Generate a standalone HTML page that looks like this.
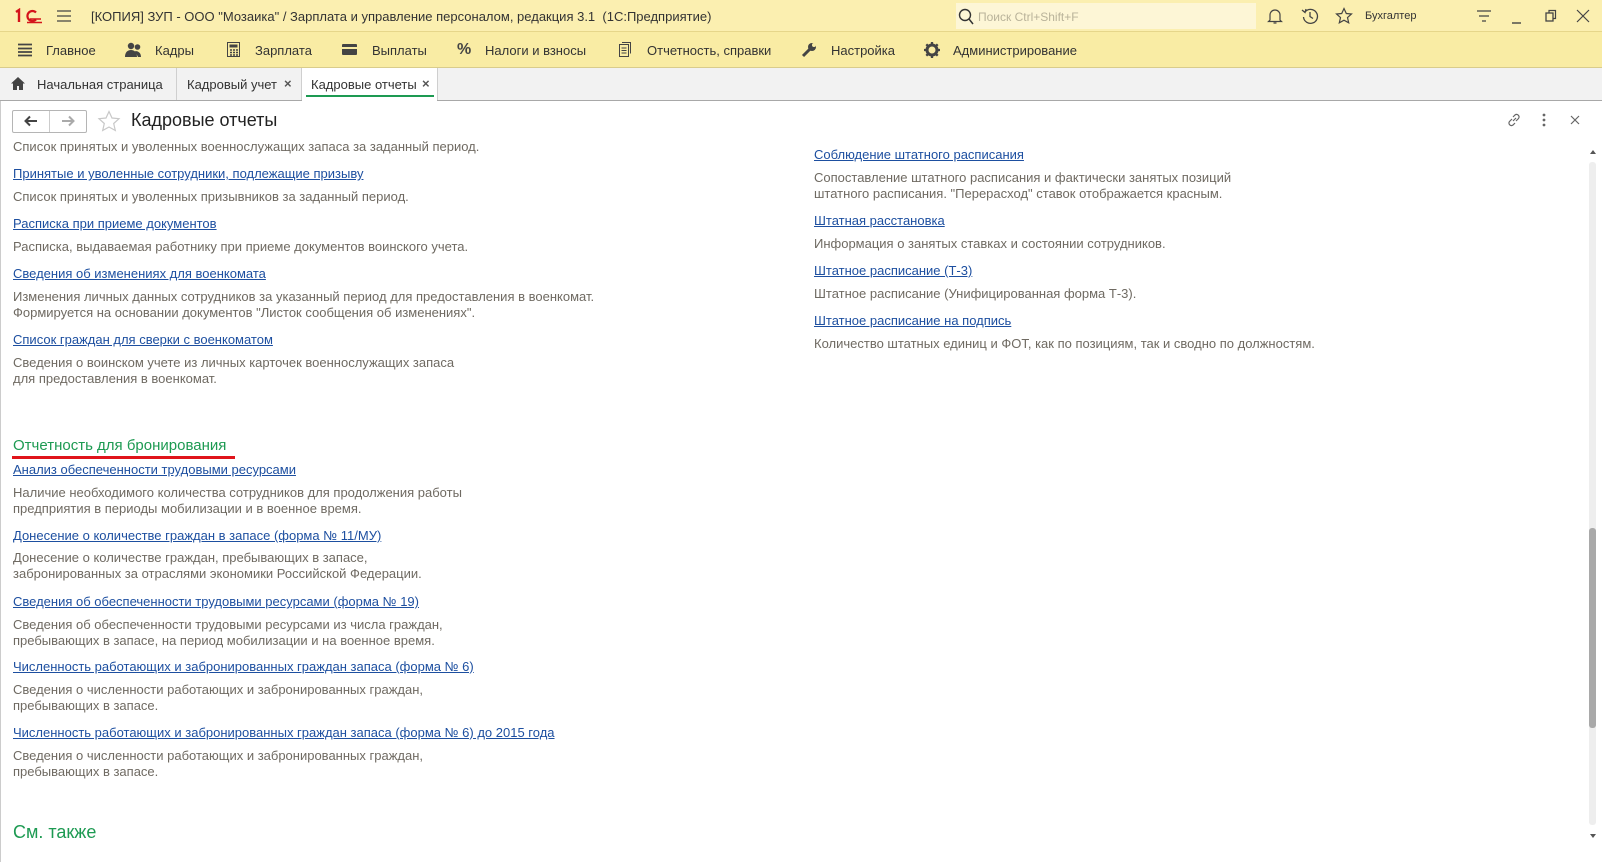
<!DOCTYPE html>
<html><head><meta charset="utf-8"><style>
*{margin:0;padding:0;box-sizing:border-box}
body{width:1602px;height:862px;overflow:hidden;background:#fff;font-family:"Liberation Sans",Arial,sans-serif;font-size:13px;color:#333;position:relative}
.a{position:absolute;white-space:nowrap}
#tb{position:absolute;left:0;top:0;width:1602px;height:32px;background:#fbefb0;border-bottom:1px solid #e6d68a}
#mb{position:absolute;left:0;top:32px;width:1602px;height:36px;background:#f9eca4;border-bottom:1px solid #d9cc8c}
#tabs{position:absolute;left:0;top:68px;width:1602px;height:33px;background:#f2f2f2;border-bottom:1px solid #a8a8a8}
.lk{color:#1d4fa0;text-decoration:underline;font-size:13px}
.ds{color:#6f6a62;font-size:13px;line-height:16.3px}
.sep{position:absolute;top:68px;width:1px;height:32px;background:#cfcfcf}
</style></head><body>
<div id="tb"></div>
<div id="mb"></div>
<div id="tabs"></div>

<!-- title bar -->
<svg class="a" style="left:14px;top:8px" width="30" height="16"><path d="M2 4l3-2v12" fill="none" stroke="#d4141b" stroke-width="2.4"/><path d="M22 4.5A5 5 0 1 0 22 11.5" fill="none" stroke="#d4141b" stroke-width="2.2"/><path d="M13 14.5h15M16 11h11" stroke="#d4141b" stroke-width="1.6"/></svg>
<svg class="a" style="left:56px;top:9px" width="16" height="14"><path d="M1 2h14M1 7h14M1 12h14" stroke="#444" stroke-width="1.3"/></svg>
<div class="a" style="left:91px;top:9px;font-size:13px;color:#333">[КОПИЯ] ЗУП - ООО "Мозаика" / Зарплата и управление персоналом, редакция 3.1&nbsp; (1С:Предприятие)</div>
<div class="a" style="left:956px;top:3px;width:300px;height:26px;background:#fdf6d6"></div>
<svg class="a" style="left:958px;top:8px" width="16" height="17"><circle cx="7" cy="7" r="5.5" fill="none" stroke="#333" stroke-width="1.4"/><path d="M11 11l4 5" stroke="#333" stroke-width="1.5"/></svg>
<div class="a" style="left:978px;top:10px;font-size:12px;color:#b9b39a">Поиск Ctrl+Shift+F</div>
<svg class="a" style="left:1267px;top:7px" width="16" height="18"><path d="M3 13V8a5 5 0 0110 0v5l1.5 1.5h-13z M6.5 16h3" fill="none" stroke="#444" stroke-width="1.2"/></svg>
<svg class="a" style="left:1301px;top:7px" width="18" height="18"><path d="M4 5A7 7 0 1 1 2.5 10" fill="none" stroke="#444" stroke-width="1.3"/><path d="M1 3l3 2.5 1-3.5M9 5v4.5l3 2" fill="none" stroke="#444" stroke-width="1.3"/></svg>
<svg class="a" style="left:1335px;top:7px" width="18" height="18"><path d="M9 1.5l2.3 5 5.2.5-4 3.6 1.2 5.2L9 13.2 4.3 15.8l1.2-5.2-4-3.6 5.2-.5z" fill="none" stroke="#444" stroke-width="1.2"/></svg>
<div class="a" style="left:1365px;top:10px;font-size:11px;color:#333">Бухгалтер</div>
<svg class="a" style="left:1476px;top:9px" width="16" height="16"><path d="M1 2h14M3 7h10M6 12h4" stroke="#444" stroke-width="1.3"/></svg>
<svg class="a" style="left:1510px;top:9px" width="14" height="16"><path d="M2 14h9" stroke="#444" stroke-width="1.4"/></svg>
<svg class="a" style="left:1544px;top:9px" width="14" height="14"><rect x="2" y="4" width="7" height="8" fill="none" stroke="#444" stroke-width="1.3"/><path d="M5 4V1.5h6.5v8H9" fill="none" stroke="#444" stroke-width="1.2"/></svg>
<svg class="a" style="left:1576px;top:9px" width="14" height="14"><path d="M1 1l12 12M13 1L1 13" stroke="#444" stroke-width="1.2"/></svg>

<!-- menu -->
<svg class="a" style="left:18px;top:43px" width="14" height="14"><path d="M0 1.5h14M0 5.5h14M0 9h14M0 12.5h14" stroke="#444" stroke-width="1.8"/></svg>
<div class="a" style="left:46px;top:43px">Главное</div>
<svg class="a" style="left:125px;top:42px" width="18" height="15"><circle cx="6" cy="4" r="3.2" fill="#444"/><circle cx="12.5" cy="5" r="2.8" fill="#444"/><path d="M0 15c0-5 3-7 6-7s6 2 6 7zM10 9c3 0 6 1.5 6 6h-3z" fill="#444"/></svg>
<div class="a" style="left:155px;top:43px">Кадры</div>
<svg class="a" style="left:227px;top:42px" width="13" height="15"><rect x="0.5" y="0.5" width="12" height="14" fill="none" stroke="#444"/><rect x="2.5" y="2.5" width="8" height="3" fill="#444"/><path d="M3 8h2M6 8h2M9 8h2M3 10.5h2M6 10.5h2M9 10.5h2M3 13h2M6 13h2M9 13h2" stroke="#444" stroke-width="1.5"/></svg>
<div class="a" style="left:255px;top:43px">Зарплата</div>
<svg class="a" style="left:342px;top:44px" width="15" height="11"><rect width="15" height="11" rx="1" fill="#444"/><rect y="3" width="15" height="2" fill="#f9eca4"/></svg>
<div class="a" style="left:372px;top:43px">Выплаты</div>
<div class="a" style="left:457px;top:41px;font-size:16px;font-weight:bold;color:#444">%</div>
<div class="a" style="left:485px;top:43px">Налоги и взносы</div>
<svg class="a" style="left:619px;top:42px" width="12" height="15"><rect x="0.5" y="2.5" width="9" height="12" fill="none" stroke="#444"/><path d="M3 .5h8.5v11" fill="none" stroke="#444"/><path d="M2.5 6h5M2.5 8.5h5M2.5 11h5" stroke="#444"/></svg>
<div class="a" style="left:647px;top:43px">Отчетность, справки</div>
<svg class="a" style="left:801px;top:42px" width="16" height="16"><path d="M2 14l7-7" stroke="#444" stroke-width="3"/><circle cx="11" cy="5" r="4" fill="#444"/><circle cx="13" cy="3" r="2" fill="#f9eca4"/></svg>
<div class="a" style="left:831px;top:43px">Настройка</div>
<svg class="a" style="left:924px;top:42px" width="16" height="16"><circle cx="8" cy="8" r="5" fill="none" stroke="#444" stroke-width="3"/><path d="M8 0v4M8 12v4M0 8h4M12 8h4M2.3 2.3l2.8 2.8M10.9 10.9l2.8 2.8M13.7 2.3l-2.8 2.8M5.1 10.9l-2.8 2.8" stroke="#444" stroke-width="2.3"/></svg>
<div class="a" style="left:953px;top:43px">Администрирование</div>

<!-- tabs -->
<svg class="a" style="left:11px;top:77px" width="14" height="13"><path d="M7 0L0 6.5h2V13h4V9h2v4h4V6.5h2z" fill="#444"/></svg>
<div class="a" style="left:37px;top:77px">Начальная страница</div>
<div class="sep" style="left:176px"></div>
<div class="a" style="left:187px;top:77px">Кадровый учет</div>
<div class="a" style="left:284px;top:76px;font-weight:bold;color:#555">×</div>
<div class="sep" style="left:301px"></div>
<div class="a" style="left:302px;top:68px;width:135px;height:33px;background:#fff"></div>
<div class="a" style="left:311px;top:77px">Кадровые отчеты</div>
<div class="a" style="left:422px;top:76px;font-weight:bold;color:#555">×</div>
<div class="a" style="left:306px;top:95px;width:128px;height:2px;background:#1d9a52"></div>
<div class="sep" style="left:437px"></div>

<div class="a" style="left:0;top:101px;width:1px;height:761px;background:#ccc"></div>

<!-- header -->
<div class="a" style="left:12px;top:110px;width:75px;height:23px;border:1px solid #b5b5b5;border-radius:2px;background:#fff"></div>
<div class="a" style="left:49px;top:111px;width:1px;height:21px;background:#ccc"></div>
<svg class="a" style="left:24px;top:115px" width="14" height="12"><path d="M13 6H2M6 1.5L1.5 6 6 10.5" fill="none" stroke="#444" stroke-width="2"/></svg>
<svg class="a" style="left:61px;top:115px" width="14" height="12"><path d="M1 6h11M8 1.5L12.5 6 8 10.5" fill="none" stroke="#aaa" stroke-width="2"/></svg>
<svg class="a" style="left:97px;top:110px" width="24" height="23"><path d="M12 1.5l3 6.5 7 .7-5.3 4.8 1.6 7L12 17l-6.3 3.5 1.6-7L2 8.7l7-.7z" fill="none" stroke="#c8c8c8" stroke-width="1.2"/></svg>
<div class="a" style="left:131px;top:110px;font-size:18px;color:#222">Кадровые отчеты</div>
<svg class="a" style="left:1506px;top:112px" width="16" height="16"><path d="M7 9l3-3M6 7L3.5 9.5a2.5 2.5 0 003.5 3.5L9 11M10 9l2.5-2.5A2.5 2.5 0 009 3L7 5" fill="none" stroke="#666" stroke-width="1.2"/></svg>
<svg class="a" style="left:1542px;top:113px" width="4" height="14"><circle cx="2" cy="2" r="1.4" fill="#666"/><circle cx="2" cy="7" r="1.4" fill="#666"/><circle cx="2" cy="12" r="1.4" fill="#666"/></svg>
<svg class="a" style="left:1570px;top:115px" width="10" height="10"><path d="M1 1l8 8M9 1L1 9" stroke="#666" stroke-width="1.2"/></svg>

<!-- left column -->
<div class="a ds" style="left:13px;top:139px;clip-path:inset(2px 0 0 0)">Список принятых и уволенных военнослужащих запаса за заданный период.</div>
<div class="a lk" style="left:13px;top:166px">Принятые и уволенные сотрудники, подлежащие призыву</div>
<div class="a ds" style="left:13px;top:189px">Список принятых и уволенных призывников за заданный период.</div>
<div class="a lk" style="left:13px;top:216px">Расписка при приеме документов</div>
<div class="a ds" style="left:13px;top:239px">Расписка, выдаваемая работнику при приеме документов воинского учета.</div>
<div class="a lk" style="left:13px;top:266px">Сведения об изменениях для военкомата</div>
<div class="a ds" style="left:13px;top:289px">Изменения личных данных сотрудников за указанный период для предоставления в военкомат.<br>Формируется на основании документов "Листок сообщения об изменениях".</div>
<div class="a lk" style="left:13px;top:332px">Список граждан для сверки с военкоматом</div>
<div class="a ds" style="left:13px;top:355px">Сведения о воинском учете из личных карточек военнослужащих запаса<br>для предоставления в военкомат.</div>

<div class="a" style="left:13px;top:437px;font-size:15px;color:#1d9a52">Отчетность для бронирования</div>
<div class="a" style="left:12px;top:456px;width:223px;height:3px;background:#e0141b"></div>
<div class="a lk" style="left:13px;top:462px">Анализ обеспеченности трудовыми ресурсами</div>
<div class="a ds" style="left:13px;top:485px">Наличие необходимого количества сотрудников для продолжения работы<br>предприятия в периоды мобилизации и в военное время.</div>
<div class="a lk" style="left:13px;top:528px">Донесение о количестве граждан в запасе (форма № 11/МУ)</div>
<div class="a ds" style="left:13px;top:550px">Донесение о количестве граждан, пребывающих в запасе,<br>забронированных за отраслями экономики Российской Федерации.</div>
<div class="a lk" style="left:13px;top:594px">Сведения об обеспеченности трудовыми ресурсами (форма № 19)</div>
<div class="a ds" style="left:13px;top:617px">Сведения об обеспеченности трудовыми ресурсами из числа граждан,<br>пребывающих в запасе, на период мобилизации и на военное время.</div>
<div class="a lk" style="left:13px;top:659px">Численность работающих и забронированных граждан запаса (форма № 6)</div>
<div class="a ds" style="left:13px;top:682px">Сведения о численности работающих и забронированных граждан,<br>пребывающих в запасе.</div>
<div class="a lk" style="left:13px;top:725px">Численность работающих и забронированных граждан запаса (форма № 6) до 2015 года</div>
<div class="a ds" style="left:13px;top:748px">Сведения о численности работающих и забронированных граждан,<br>пребывающих в запасе.</div>
<div class="a" style="left:13px;top:822px;font-size:18px;color:#1d9a52">См. также</div>

<!-- right column -->
<div class="a lk" style="left:814px;top:147px">Соблюдение штатного расписания</div>
<div class="a ds" style="left:814px;top:170px">Сопоставление штатного расписания и фактически занятых позиций<br>штатного расписания. "Перерасход" ставок отображается красным.</div>
<div class="a lk" style="left:814px;top:213px">Штатная расстановка</div>
<div class="a ds" style="left:814px;top:236px">Информация о занятых ставках и состоянии сотрудников.</div>
<div class="a lk" style="left:814px;top:263px">Штатное расписание (Т-3)</div>
<div class="a ds" style="left:814px;top:286px">Штатное расписание (Унифицированная форма Т-3).</div>
<div class="a lk" style="left:814px;top:313px">Штатное расписание на подпись</div>
<div class="a ds" style="left:814px;top:336px">Количество штатных единиц и ФОТ, как по позициям, так и сводно по должностям.</div>

<!-- scrollbar -->
<div class="a" style="left:1590px;top:150px;width:0;height:0;border-left:3px solid transparent;border-right:3px solid transparent;border-bottom:4px solid #555"></div>
<div class="a" style="left:1589px;top:162px;width:7px;height:663px;background:#eee;border-radius:3px"></div>
<div class="a" style="left:1589px;top:528px;width:7px;height:200px;background:#a9a9a9;border-radius:3px"></div>
<div class="a" style="left:1590px;top:834px;width:0;height:0;border-left:3px solid transparent;border-right:3px solid transparent;border-top:4px solid #555"></div>
</body></html>
